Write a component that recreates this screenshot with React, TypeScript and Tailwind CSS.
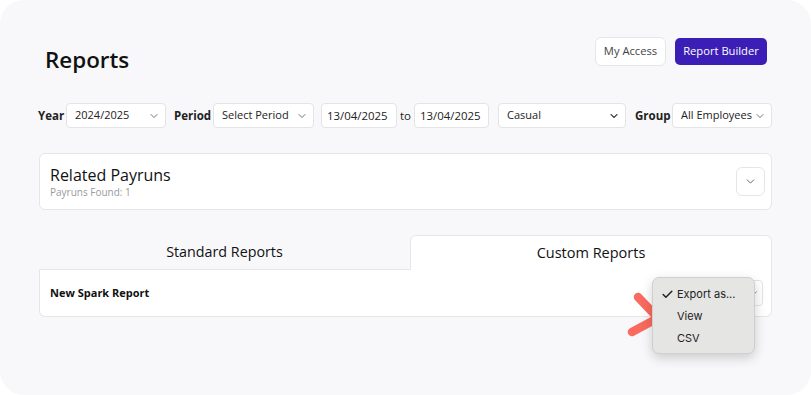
import { ChevronDown, Check } from "lucide-react";

function Select({ value, width, strong }: { value: string; width: string; strong?: boolean }) {
  return (
    <div
      className={`${width} h-[25px] bg-white border border-[#e4e4e7] rounded-[4px] flex items-center justify-between pl-[8px] pr-[5px] text-[11px] text-[#222] whitespace-nowrap`}
    >
      <span>{value}</span>
      <ChevronDown size={12} strokeWidth={strong ? 2.2 : 1.5} className="text-[#444] shrink-0" />
    </div>
  );
}

function DateBox({ value, width }: { value: string; width: string }) {
  return (
    <div className={`${width} h-[25px] bg-white border border-[#e4e4e7] rounded-[4px] flex items-center pl-[5px] text-[11.4px] text-[#222]`}>
      {value}
    </div>
  );
}

export default function App() {
  return (
    <div className="w-[811px] h-[395px] bg-white" style={{ fontFamily: '"Open Sans", "Noto Sans", sans-serif' }}>
      <div className="w-full h-full rounded-[24px] bg-[#f8f8fa] px-[39px] pt-[37px]">
        {/* Header */}
        <div className="flex justify-between items-start">
          <h1 className="pl-[6px] pt-[7px] text-[22.4px] font-semibold text-[#111] leading-[32px]">Reports</h1>
          <div className="flex items-start gap-[9px] pr-[5px]">
            <button className="w-[71px] h-[29px] bg-white border border-[#e6e6e8] rounded-[6px] text-[11.2px] text-[#444]">
              My Access
            </button>
            <button className="mt-[1px] w-[92px] h-[27px] bg-[#3a1eb5] rounded-[5px] text-[11.2px] text-white">
              Report Builder
            </button>
          </div>
        </div>

        {/* Filters */}
        <div className="mt-[27px] flex items-center text-[11.5px]">
          <span className="font-bold text-[#222] w-[28px] -ml-[1px]">Year</span>
          <Select value="2024/2025" width="w-[100px]" />
          <span className="font-bold text-[#222] ml-[8px] w-[39px]">Period</span>
          <Select value="Select Period" width="w-[101px]" />
          <div className="ml-[7px]">
            <DateBox value="13/04/2025" width="w-[76px]" />
          </div>
          <span className="mx-[3px] text-[#222]">to</span>
          <DateBox value="13/04/2025" width="w-[75px]" />
          <div className="ml-[9px]">
            <Select value="Casual" width="w-[128px]" strong />
          </div>
          <span className="font-bold text-[#222] ml-[9px] w-[37px]">Group</span>
          <Select value="All Employees" width="w-[100px]" />
        </div>

        {/* Related Payruns */}
        <div className="mt-[25px] h-[57px] bg-white border border-[#e6e6e8] rounded-[6px] flex items-center justify-between pl-[10px] pr-[6px]">
          <div className="flex flex-col">
            <span className="text-[16px] text-[#111] leading-[20px]">Related Payruns</span>
            <span className="text-[10px] text-[#9a9a9a] leading-[14px]">Payruns Found: 1</span>
          </div>
          <div className="w-[29px] h-[29px] border border-[#e6e6e8] rounded-[6px] flex items-center justify-center">
            <ChevronDown size={13} strokeWidth={1.6} className="text-[#555]" />
          </div>
        </div>

        {/* Tabs */}
        <div className="mt-[25px] grid grid-cols-[371px_1fr]">
          <div className="h-[35px] border-b border-[#e6e6e8] flex items-center justify-center text-[14.3px] text-[#111]">
            Standard Reports
          </div>
          <div className="h-[35px] bg-white border border-b-0 border-[#e6e6e8] rounded-t-[6px] flex items-center justify-center text-[14.5px] text-[#111]">
            Custom Reports
          </div>
        </div>
        <div className="relative h-[47px] bg-white border border-t-0 border-[#e6e6e8] rounded-b-[6px] flex items-center justify-between pl-[10px] pr-[8px]">
          <span className="text-[11px] font-bold text-[#111]">New Spark Report</span>
          <div className="w-[100px] h-[26px] border border-[#e4e4e7] rounded-[4px] flex items-center justify-end pr-[3px]">
            <ChevronDown size={10} strokeWidth={1.6} className="text-[#444]" />
          </div>

          {/* Arrow */}
          <svg className="absolute left-[586px] top-[22px]" width="44" height="48" viewBox="0 0 44 48">
            <path d="M 12 5 L 32 26 L 6 40" fill="none" stroke="#fa6a5e" strokeWidth="8.5" strokeLinecap="round" strokeLinejoin="round" />
          </svg>

          {/* Dropdown menu */}
          <div
            className="absolute left-[612px] top-[7px] w-[103px] h-[77px] bg-[#e5e5e3] border border-[#cfcfcd] rounded-[7px] shadow-[0_4px_12px_rgba(0,0,0,0.18)] py-[5px] text-[11px] text-[#222]"
            style={{ fontFamily: 'Inter, "Liberation Sans", sans-serif' }}
          >
            <div className="h-[22px] flex items-center pl-[8px]">
              <Check size={13} strokeWidth={2.8} className="text-[#222] mr-[3px]" />
              <span>Export as...</span>
            </div>
            <div className="h-[22px] flex items-center pl-[24px]">View</div>
            <div className="h-[22px] flex items-center pl-[24px]">CSV</div>
          </div>
        </div>
      </div>
    </div>
  );
}
